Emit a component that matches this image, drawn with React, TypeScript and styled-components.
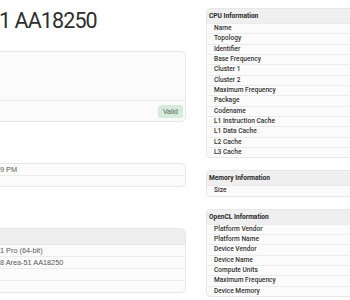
import styled, { createGlobalStyle } from "styled-components";

const GlobalStyle = createGlobalStyle`
  html, body {
    margin: 0;
    padding: 0;
    background: #ffffff;
    overflow: hidden;
  }
`;

const cpuRows = [
  "Name",
  "Topology",
  "Identifier",
  "Base Frequency",
  "Cluster 1",
  "Cluster 2",
  "Maximum Frequency",
  "Package",
  "Codename",
  "L1 Instruction Cache",
  "L1 Data Cache",
  "L2 Cache",
  "L3 Cache",
];

const openclRows = [
  "Platform Vendor",
  "Platform Name",
  "Device Vendor",
  "Device Name",
  "Compute Units",
  "Maximum Frequency",
  "Device Memory",
];

const App = () => {
  return (
    <>
      <GlobalStyle />
      <Page>
        <LeftColumn>
          <Title>1 AA18250</Title>
          <Card $top={19}>
            <CardBody />
            <CardFooter>
              <Badge>Valid</Badge>
            </CardFooter>
          </Card>
          <Card $top={41}>
            <InfoRow $h={11}>9 PM</InfoRow>
            <InfoRow $h={10} $last />
          </Card>
          <Card $top={41}>
            <InfoHeader />
            <InfoRow $h={11}>1 Pro (64-bit)</InfoRow>
            <InfoRow $h={11}>8 Area-51 AA18250</InfoRow>
            <InfoRow $h={10.5} />
            <InfoRow $h={11} $last />
          </Card>
        </LeftColumn>

        <RightColumn>
          <Table>
            <TableHeader>CPU Information</TableHeader>
            {cpuRows.map((label) => (
              <TableRow key={label}>{label}</TableRow>
            ))}
          </Table>
          <Table>
            <TableHeader>Memory Information</TableHeader>
            <TableRow>Size</TableRow>
          </Table>
          <Table>
            <TableHeader>OpenCL Information</TableHeader>
            {openclRows.map((label) => (
              <TableRow key={label}>{label}</TableRow>
            ))}
          </Table>
        </RightColumn>
      </Page>
    </>
  );
};

const Page = styled.div`
  display: grid;
  grid-template-columns: 192px 220px;
  column-gap: 20px;
  margin-left: -6px;
  width: 440px;
`;

const LeftColumn = styled.div`
  display: flex;
  flex-direction: column;
`;

const Title = styled.h1`
  margin: 0;
  padding: 10px 0 0 5px;
  height: 22px;
  font-family: Roboto, "Liberation Sans", sans-serif;
  font-weight: 400;
  font-size: 21.5px;
  line-height: 22px;
  letter-spacing: -0.9px;
  color: #2e2e2e;
`;

const Card = styled.div<{ $top: number }>`
  margin-top: ${(p) => p.$top}px;
  border: 1px solid #e7e7e7;
  border-radius: 5px;
  background: #fbfbfb;
  overflow: hidden;
`;

const CardBody = styled.div`
  height: 48px;
  border-bottom: 1px solid #eaeaea;
`;

const CardFooter = styled.div`
  display: flex;
  justify-content: flex-end;
  align-items: center;
  height: 20px;
  padding-right: 2px;
`;

const Badge = styled.span`
  display: inline-flex;
  align-items: center;
  justify-content: center;
  width: 25px;
  height: 13px;
  border-radius: 3px;
  background: #d6ebdb;
  color: #4f6656;
  font-family: "Liberation Sans", Arial, sans-serif;
  font-size: 7px;
`;

const InfoHeader = styled.div`
  height: 15px;
  background: #eeeeee;
  border-bottom: 1px solid #e6e6e6;
`;

const InfoRow = styled.div<{ $h: number; $last?: boolean }>`
  height: ${(p) => p.$h}px;
  padding-left: 5px;
  border-bottom: ${(p) => (p.$last ? "none" : "1px solid #ececec")};
  font-family: "Liberation Sans", Arial, sans-serif;
  font-size: 7.3px;
  line-height: ${(p) => p.$h}px;
  color: #5a5a5a;
  white-space: nowrap;
`;

const RightColumn = styled.div`
  display: flex;
  flex-direction: column;
  gap: 12px;
  padding-top: 8px;
`;

const Table = styled.div`
  border: 1px solid #e7e7e7;
  border-radius: 4px;
  background: #fbfbfb;
  overflow: hidden;
  font-family: Roboto, "Liberation Sans", sans-serif;
  font-size: 6.6px;
`;

const TableHeader = styled.div`
  height: 14px;
  line-height: 14px;
  padding-left: 2px;
  background: #efefef;
  font-weight: 700;
  color: #262626;
`;

const TableRow = styled.div`
  height: 9.33px;
  line-height: 9.33px;
  padding-left: 7px;
  border-top: 1px solid #ebebeb;
  font-weight: 500;
  color: #333333;
  white-space: nowrap;
`;

export default App;
